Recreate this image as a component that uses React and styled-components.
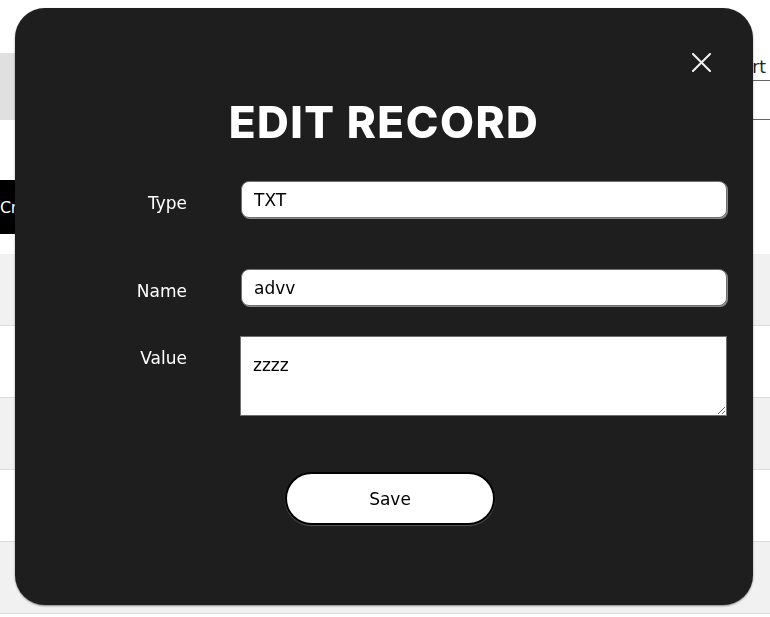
import React from "react";
import styled, { createGlobalStyle } from "styled-components";

const Global = createGlobalStyle`
  html, body { margin: 0; padding: 0; background: #fff; }
  body { font-family: "DejaVu Sans", Verdana, sans-serif; color: #222; overflow: hidden; }
  * { box-sizing: border-box; }
`;

const Page = styled.div`
  width: 770px;
  height: 617px;
  padding-top: 53px;
  display: flex;
  flex-direction: column;
`;

const Header = styled.div`
  display: flex;
  height: 67px;
`;

const HeaderBand = styled.div`
  flex: 1;
  background: #e0e0e0;
`;

const Tabs = styled.div`
  width: 140px;
  display: flex;
  justify-content: flex-end;
  align-items: flex-start;
  border-bottom: 1px solid #666;
`;

const Tab = styled.div`
  font-family: "DejaVu Sans", Verdana, sans-serif;
  font-size: 17px;
  line-height: 20px;
  padding: 4px 4px 3px 10px;
  border-bottom: 1px solid #666;
  width: 100%;
  text-align: right;
  color: #222;
`;

const Toolbar = styled.div`
  display: flex;
  margin-top: 60px;
  height: 54px;
`;

const CreateButton = styled.button`
  background: #000;
  color: #fff;
  border: none;
  font-family: "DejaVu Sans", Verdana, sans-serif;
  font-size: 16px;
  letter-spacing: -0.5px;
  padding: 0 16px 0 0;
  height: 54px;
  flex-shrink: 0;
`;

const Table = styled.div`
  margin-top: 20px;
  display: flex;
  flex-direction: column;
`;

const Row = styled.div`
  height: 72px;
  background: ${(p) => (p.$alt ? "#f1f1f1" : "#fff")};
  border-bottom: 1px solid #dedde6;
`;

const Modal = styled.div`
  position: fixed;
  top: 8px;
  left: 15px;
  width: 738px;
  height: 597px;
  background: #1e1e1e;
  border-radius: 30px;
  box-shadow: 0 1px 2px rgba(0, 0, 0, 0.45);
  display: flex;
  flex-direction: column;
  align-items: center;
  padding-top: 88px;
`;

const Close = styled.button`
  position: absolute;
  top: 42px;
  right: 40px;
  width: 24px;
  height: 24px;
  padding: 0;
  border: none;
  background: transparent;
  display: flex;
  align-items: center;
  justify-content: center;
  cursor: pointer;
`;

const Title = styled.h1`
  margin: 0;
  font-family: Inter, "Open Sans", sans-serif;
  font-weight: 800;
  font-size: 44px;
  line-height: 52px;
  letter-spacing: 1.5px;
  color: #fff;
`;

const Form = styled.div`
  align-self: stretch;
  margin-top: 33px;
  display: grid;
  grid-template-columns: 172px 486px;
  column-gap: 54px;
  align-items: start;
`;

const Label = styled.label`
  grid-column: 1;
  text-align: right;
  color: #fff;
  font-family: "DejaVu Sans", Verdana, sans-serif;
  font-size: 17px;
  line-height: 20px;
  padding-top: 12px;
  margin-bottom: ${(p) => p.$gap}px;
`;

const Input = styled.input`
  grid-column: 2;
  width: 486px;
  height: 37px;
  border: 1px solid #6f6f6f;
  border-radius: 8px;
  box-shadow: 1px 1px 0 #8a8a8a;
  background: #fff;
  padding: 1px 12px 0;
  font-family: "DejaVu Sans", Verdana, sans-serif;
  font-size: 17px;
  color: #000;
  outline: none;
  margin-bottom: ${(p) => p.$gap}px;
`;

const TextArea = styled.textarea`
  grid-column: 2;
  width: 487px;
  height: 80px;
  margin-left: -1px;
  border: 1px solid #6f6f6f;
  border-radius: 0;
  background: #fff;
  padding: 18px 12px;
  font-family: "DejaVu Sans", Verdana, sans-serif;
  font-size: 17px;
  line-height: 20px;
  color: #000;
  outline: none;
  resize: both;
`;

const Footer = styled.div`
  margin-top: 56px;
  display: flex;
  justify-content: center;
  padding-left: 12px;
`;

const SaveButton = styled.button`
  width: 210px;
  height: 53px;
  border-radius: 27px;
  border: 2px solid #000;
  box-shadow: 0 1px 1px rgba(255, 255, 255, 0.25);
  background: #fff;
  color: #000;
  font-family: "DejaVu Sans", Verdana, sans-serif;
  font-size: 17px;
  padding-top: 2px;
  cursor: pointer;
`;

const fields = [
  { label: "Type", value: "TXT", gap: 51 },
  { label: "Name", value: "advv", gap: 30 },
];

export default function App() {
  return (
    <>
      <Global />
      <Page>
        <Header>
          <HeaderBand />
          <Tabs>
            <Tab>Export</Tab>
          </Tabs>
        </Header>
        <Toolbar>
          <CreateButton>Create record</CreateButton>
        </Toolbar>
        <Table>
          {[true, false, true, false, true].map((alt, i) => (
            <Row key={i} $alt={alt} />
          ))}
        </Table>
      </Page>
      <Modal>
        <Close aria-label="Close">
          <svg width="19" height="19" viewBox="0 0 19 19">
            <path d="M1 1 L18 18 M18 1 L1 18" stroke="#f2f2f2" strokeWidth="2" strokeLinecap="square" />
          </svg>
        </Close>
        <Title>EDIT RECORD</Title>
        <Form>
          {fields.map((f) => (
            <React.Fragment key={f.label}>
              <Label $gap={f.gap}>{f.label}</Label>
              <Input defaultValue={f.value} $gap={f.gap} />
            </React.Fragment>
          ))}
          <Label $gap={0}>Value</Label>
          <TextArea defaultValue="zzzz" />
        </Form>
        <Footer>
          <SaveButton>Save</SaveButton>
        </Footer>
      </Modal>
    </>
  );
}
